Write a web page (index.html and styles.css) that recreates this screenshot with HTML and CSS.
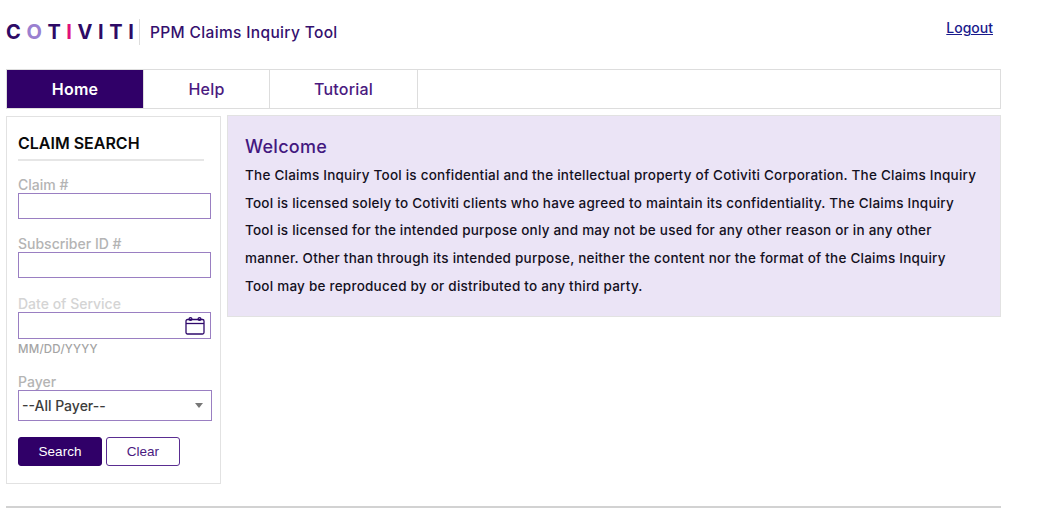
FILE: index.html
```html
<!DOCTYPE html>
<html lang="en">

<head>
    <meta charset="UTF-8">
    <meta name="viewport" content="width=device-width, initial-scale=1.0">
    <title>PPM Claims Inquiry Tool</title>
    <link rel="stylesheet" href="styles.css">
</head>

<body>
    <div class="page">
        <!-- Header -->
        <header class="header">
            <div class="brand">
                <div class="logo"><span>C</span><span class="logo-o">O</span><span>T</span><span class="logo-i">I</span><span>V</span><span>I</span><span>T</span><span>I</span></div>
                <div class="app-name">PPM Claims Inquiry Tool</div>
            </div>
            <a class="logout" href="#">Logout</a>
        </header>

        <!-- Tabs -->
        <nav class="tabs">
            <a class="tab tab-home active" href="#">Home</a>
            <a class="tab tab-help" href="#">Help</a>
            <a class="tab tab-tutorial" href="#">Tutorial</a>
        </nav>

        <div class="main">
            <!-- Claim search -->
            <aside class="search">
                <h2>CLAIM SEARCH</h2>

                <label class="field-label" for="claim">Claim #</label>
                <input class="text-input" type="text" id="claim">

                <label class="field-label label-sub" for="subscriber">Subscriber ID #</label>
                <input class="text-input" type="text" id="subscriber">

                <label class="field-label label-date" for="dos">Date of Service</label>
                <div class="date-box">
                    <input type="text" id="dos">
                    <svg class="cal" width="20" height="19" viewBox="0 0 20 19" fill="none" stroke="#2f0a6b" stroke-width="1.3">
                        <rect x="1" y="3.5" width="18" height="14.5" rx="1.5"/>
                        <path d="M1 7.5H19"/>
                        <circle cx="5.5" cy="3" r="1.4"/>
                        <circle cx="14.5" cy="3" r="1.4"/>
                    </svg>
                </div>
                <div class="hint">MM/DD/YYYY</div>

                <label class="field-label label-payer" for="payer">Payer</label>
                <div class="select-box" id="payer">
                    <span>--All Payer--</span>
                    <i class="caret"></i>
                </div>

                <div class="actions">
                    <button class="btn btn-search">Search</button>
                    <button class="btn btn-clear">Clear</button>
                </div>
            </aside>

            <!-- Welcome -->
            <section class="welcome">
                <h1>Welcome</h1>
                <p>The Claims Inquiry Tool is confidential and the intellectual property of Cotiviti Corporation. The Claims Inquiry<br>
                Tool is licensed solely to Cotiviti clients who have agreed to maintain its confidentiality. The Claims Inquiry<br>
                Tool is licensed for the intended purpose only and may not be used for any other reason or in any other<br>
                manner. Other than through its intended purpose, neither the content nor the format of the Claims Inquiry<br>
                Tool may be reproduced by or distributed to any third party.</p>
            </section>
        </div>

        <div class="footer-rule"></div>
    </div>
</body>

</html>
```
FILE: styles.css
```css
body {
    font-family: Inter, "Open Sans", Arial, sans-serif;
    background-color: #ffffff;
    margin: 0;
    padding: 0;
}

.page {
    width: 995px;
    margin-left: 6px;
}

.header {
    display: flex;
    justify-content: space-between;
    height: 69px;
}

.brand {
    display: flex;
    align-items: center;
    height: 32px;
    margin-top: 16px;
}

.logo {
    display: flex;
    width: 128px;
    justify-content: space-between;
    font-size: 20px;
    font-weight: 700;
    color: #2e0a66;
}

.logo-o {
    color: #9a80d0;
}

.logo-i {
    color: #e0107c;
}

.app-name {
    margin-left: 5px;
    padding-left: 10px;
    border-left: 1px solid #dddddd;
    height: 26px;
    line-height: 28px;
    font-size: 15.5px;
    letter-spacing: 0.35px;
    font-weight: 500;
    color: #34106e;
}

.logout {
    margin: 19px 8px 0 0;
    font-size: 14px;
    font-weight: 500;
    color: #1a1a8c;
}

.tabs {
    display: flex;
    height: 40px;
    border: 1px solid #dddddd;
    box-sizing: border-box;
}

.tab {
    display: flex;
    align-items: center;
    justify-content: center;
    font-size: 16px;
    letter-spacing: 0.2px;
    font-weight: 500;
    color: #4a1a80;
    text-decoration: none;
    border-right: 1px solid #dddddd;
    box-sizing: border-box;
}

.tab-home {
    width: 137px;
}

.tab-help {
    width: 126px;
}

.tab-tutorial {
    width: 148px;
}

.tab.active {
    background: #300068;
    color: #ffffff;
    font-weight: 600;
}

.main {
    display: flex;
    align-items: flex-start;
    gap: 6px;
    margin-top: 6px;
}

.search {
    width: 215px;
    height: 368px;
    margin-top: 1px;
    box-sizing: border-box;
    border: 1px solid #e2e2e2;
    padding: 17px 10px 0 11px;
    flex-shrink: 0;
}

.search h2 {
    margin: 0 6px 16px 0;
    padding-bottom: 7px;
    border-bottom: 2px solid #e6e6e6;
    font-size: 16px;
    line-height: 18px;
    font-weight: 600;
    color: #0a0a0a;
}

.field-label {
    display: block;
    font-size: 14px;
    font-weight: 500;
    line-height: 16px;
    color: #b4b4b4;
    margin-top: 9px;
}

.label-sub {
    margin-top: 17px;
}

.label-date {
    margin-top: 18px;
    color: #d4d4d4;
}

.label-payer {
    margin-top: 18px;
}

.text-input {
    display: block;
    width: 193px;
    height: 26px;
    box-sizing: border-box;
    border: 1px solid #9a7fc2;
    margin: 0;
    padding: 0;
}

.date-box {
    display: flex;
    align-items: center;
    justify-content: flex-end;
    width: 193px;
    height: 27px;
    box-sizing: border-box;
    border: 1px solid #9a7fc2;
    padding-right: 5px;
}

.date-box input {
    border: none;
    flex: 1;
    min-width: 0;
    height: 20px;
    padding: 0;
}

.hint {
    margin-top: 3px;
    font-size: 11.5px;
    font-weight: 500;
    line-height: 14px;
    letter-spacing: 0.2px;
    color: #a4a4a4;
}

.select-box {
    display: flex;
    align-items: center;
    justify-content: space-between;
    width: 194px;
    height: 31px;
    box-sizing: border-box;
    border: 1px solid #9a7fc2;
    padding: 0 8px 0 3px;
    font-size: 14px;
    font-weight: 500;
    color: #3c3c3c;
}

.caret {
    width: 0;
    height: 0;
    border-left: 4.5px solid transparent;
    border-right: 4.5px solid transparent;
    border-top: 5px solid #777777;
}

.actions {
    display: flex;
    gap: 4px;
    margin-top: 16px;
}

.btn {
    height: 29px;
    box-sizing: border-box;
    border-radius: 3px;
    font-family: "Liberation Sans", Arial, sans-serif;
    font-size: 13.5px;
    padding: 0;
}

.btn-search {
    width: 84px;
    background: #300068;
    border: 1px solid #300068;
    color: #ffffff;
}

.btn-clear {
    width: 74px;
    background: #ffffff;
    border: 1.5px solid #5a2d91;
    color: #4a1a80;
}

.welcome {
    flex: 1;
    height: 202px;
    box-sizing: border-box;
    background: #ebe4f6;
    border: 1px solid #e2e2e2;
    padding: 20px 17px 0;
}

.welcome h1 {
    margin: 0 0 4px;
    font-size: 18px;
    letter-spacing: 0.3px;
    line-height: 22px;
    font-weight: 500;
    color: #43187f;
}

.welcome p {
    margin: 0;
    font-size: 13.5px;
    letter-spacing: 0.23px;
    line-height: 27.7px;
    font-weight: 500;
    color: #14101e;
    white-space: nowrap;
}

.footer-rule {
    margin-top: 22px;
    border-top: 2px solid #d2d2d2;
}
```
